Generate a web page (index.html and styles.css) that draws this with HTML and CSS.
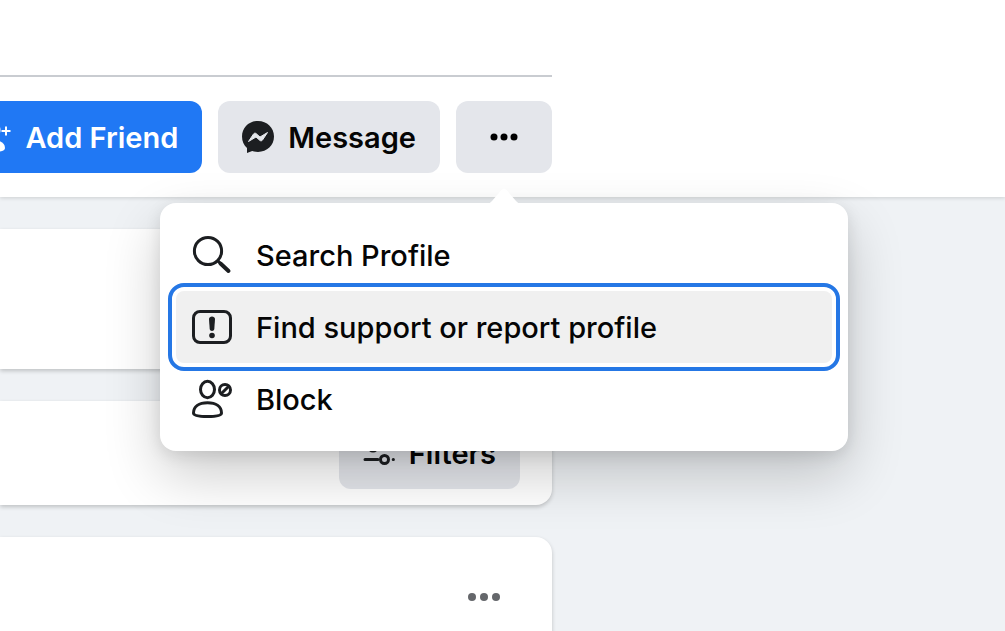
FILE: index.html
```
<!DOCTYPE html>
<html lang="en">
<head>
  <meta charset="UTF-8">
  <meta name="viewport" content="width=device-width, initial-scale=1.0">
  <title>Profile</title>
  <link rel="stylesheet" href="styles.css">
</head>
<body>
  <!-- profile header -->
  <header class="profile-header">
    <div class="column">
      <div class="profile-cover"></div>
      <div class="profile-actions">
        <button type="button" class="btn btn-primary">
          <svg class="btn-icon" viewBox="0 0 32 32" fill="currentColor">
            <ellipse cx="14" cy="9" rx="7.500" ry="8"/>
            <path d="M1 27c0-5 5-8 12.500-8S26 22 26 27c0 3-4 4-12.500 4S1 30 1 27z"/>
            <path d="M27 5.500v9M22.500 10h9" fill="none" stroke="currentColor" stroke-width="2"/>
          </svg>
          Add Friend
        </button>
        <button type="button" class="btn">
          <svg class="btn-icon" viewBox="0 0 32 32">
            <path d="M16 0C7 0 0 6.600 0 15.500c0 4.700 1.900 8.700 5 11.500V32l5.200-2c1.800.600 3.700.900 5.800.900 9 0 16-6.500 16-15.400S25 0 16 0z" fill="#1c1e21"/>
            <path d="M6.500 20.500l5-7.500c.600-.900 1.700-1.100 2.500-.500l4 3.500 7.500-4.500-5 7.500c-.600.900-1.700 1.100-2.500.500l-4-3.500z" fill="#e4e6eb" stroke="#e4e6eb" stroke-width="1" stroke-linejoin="round"/>
          </svg>
          Message
        </button>
        <div class="more">
          <button type="button" class="btn btn-more" aria-label="More" aria-expanded="true">
            <svg class="btn-icon" viewBox="0 0 32 32">
              <circle cx="6" cy="16" r="3.500"/>
              <circle cx="16" cy="16" r="3.500"/>
              <circle cx="26" cy="16" r="3.500"/>
            </svg>
          </button>

          <!-- dropdown -->
          <div class="menu" role="menu">
            <svg class="menu-arrow" viewBox="0 0 36 16">
              <path d="M0 16c3 0 4-1 6-3L15 2.500c2-2.300 4-2.300 6 0L30 13c2 2 3 3 6 3z" fill="#fff"/>
            </svg>
            <button type="button" class="menu-item" role="menuitem">
              <svg class="menu-icon" viewBox="0 0 40 40">
                <circle cx="16" cy="16" r="13.600"/>
                <path d="M26 26l2 2"/>
                <path d="M28.500 28.500l8 7.500" stroke-width="4"/>
              </svg>
              Search Profile
            </button>
            <button type="button" class="menu-item focused" role="menuitem">
              <svg class="menu-icon" viewBox="0 0 40 40">
                <rect x="1.500" y="4.500" width="37" height="31" rx="6.500"/>
                <path d="M17 12c0-3.500 6-3.500 6 0l-.700 10c-.200 2.600-4.400 2.600-4.600 0z" class="solid"/>
                <circle cx="20" cy="28.500" r="2.800" class="solid"/>
              </svg>
              Find support or report profile
            </button>
            <button type="button" class="menu-item" role="menuitem">
              <svg class="menu-icon" viewBox="0 0 40 40">
                <ellipse cx="15.500" cy="10.500" rx="7" ry="8.200"/>
                <path d="M1.500 34C1.500 27.500 7 23.700 15.500 23.700S29.500 27.500 29.500 34C29.500 36.500 25 37.500 15.500 37.500S1.500 36.500 1.500 34z"/>
                <circle cx="33" cy="11" r="5.500"/>
                <path d="M29.200 14.800l7.600-7.600"/>
              </svg>
              Block
            </button>
          </div>
        </div>
      </div>
    </div>
  </header>

  <!-- feed -->
  <main class="column feed">
    <section class="card composer"></section>
    <section class="card posts-bar">
      <button type="button" class="btn">
        <svg class="btn-icon" viewBox="0 0 32 32" fill="none" stroke="#1c1e21" stroke-width="3" stroke-linecap="round">
          <path d="M2 10h2M16 10h14M2 22.500h13M30.200 22.500h.200"/>
          <circle cx="10" cy="10" r="4"/>
          <circle cx="21.500" cy="22.500" r="4"/>
        </svg>
        Filters
      </button>
    </section>
    <section class="card post">
      <button type="button" class="post-more" aria-label="Post options">
        <svg class="post-dots" viewBox="0 0 32 8">
          <circle cx="4" cy="4" r="4"/>
          <circle cx="16" cy="4" r="4"/>
          <circle cx="28" cy="4" r="4"/>
        </svg>
      </button>
    </section>
  </main>
</body>
</html>
```
FILE: styles.css
```
* {
  margin: 0;
  padding: 0;
  box-sizing: border-box;
}

body {
  font-family: Inter, "Liberation Sans", sans-serif;
  background-color: #eff2f5;
  color: #050505;
  min-height: 100vh;
  display: flex;
  flex-direction: column;
}

button {
  font-family: inherit;
  color: inherit;
  border: none;
  cursor: pointer;
}

.column {
  width: 100%;
  max-width: 552px;
}

/* header */
.profile-header {
  background-color: #fff;
  box-shadow: 0 1px 4px rgba(0, 0, 0, 0.15);
  position: relative;
  z-index: 10;
}

.profile-cover {
  height: 77px;
  border-bottom: 2px solid #c9ccd1;
}

.profile-actions {
  display: flex;
  justify-content: flex-end;
  gap: 16px;
  padding: 24px 0;
}

.btn {
  display: flex;
  align-items: center;
  justify-content: center;
  gap: 14px;
  height: 72px;
  padding: 0 24px;
  border-radius: 12px;
  background-color: #e4e6eb;
  font-size: 29px;
  font-weight: 600;
  white-space: nowrap;
}

.btn-primary {
  background-color: #2078f4;
  color: #fff;
}

.btn-more {
  width: 96px;
}

.btn-icon {
  width: 32px;
  height: 32px;
  flex-shrink: 0;
}

/* dropdown menu */
.more {
  position: relative;
}

.menu {
  position: absolute;
  top: 102px;
  left: 50%;
  transform: translateX(-50%);
  width: 688px;
  padding: 16px;
  background-color: #fff;
  border-radius: 16px;
  box-shadow: 0 24px 56px rgba(0, 0, 0, 0.2), 0 4px 16px rgba(0, 0, 0, 0.1);
}

.menu-arrow {
  position: absolute;
  top: -15px;
  left: 50%;
  width: 36px;
  height: 16px;
  transform: translateX(-50%);
}

.menu-item {
  display: flex;
  align-items: center;
  gap: 24px;
  width: 100%;
  height: 72px;
  padding: 0 16px;
  border-radius: 8px;
  background-color: transparent;
  font-size: 29px;
  font-weight: 500;
  text-align: left;
}

.menu-item.focused {
  background-color: #f0f0f0;
  outline: 4px solid #2577e5;
  outline-offset: 4px;
}

.menu-icon {
  width: 40px;
  height: 40px;
  flex-shrink: 0;
  fill: none;
  stroke: #1c1e21;
  stroke-width: 3;
  stroke-linecap: round;
}

.menu-icon .solid {
  fill: #1c1e21;
  stroke: none;
}

/* feed */
.feed {
  flex: 1;
  display: flex;
  flex-direction: column;
  gap: 32px;
  padding-top: 32px;
}

.card {
  background-color: #fff;
  border-radius: 0 16px 16px 0;
  box-shadow: 0 2px 4px rgba(0, 0, 0, 0.2);
}

.composer {
  height: 140px;
}

.posts-bar {
  display: flex;
  justify-content: flex-end;
  padding: 16px 32px;
}

.post {
  flex: 1;
  border-radius: 0 16px 0 0;
  display: flex;
  justify-content: flex-end;
  align-items: flex-start;
  padding: 24px 32px 0;
}

.post-more {
  display: flex;
  align-items: center;
  justify-content: center;
  width: 72px;
  height: 72px;
  background-color: transparent;
}

.post-dots {
  width: 32px;
  height: 8px;
  fill: #65676b;
}
```
